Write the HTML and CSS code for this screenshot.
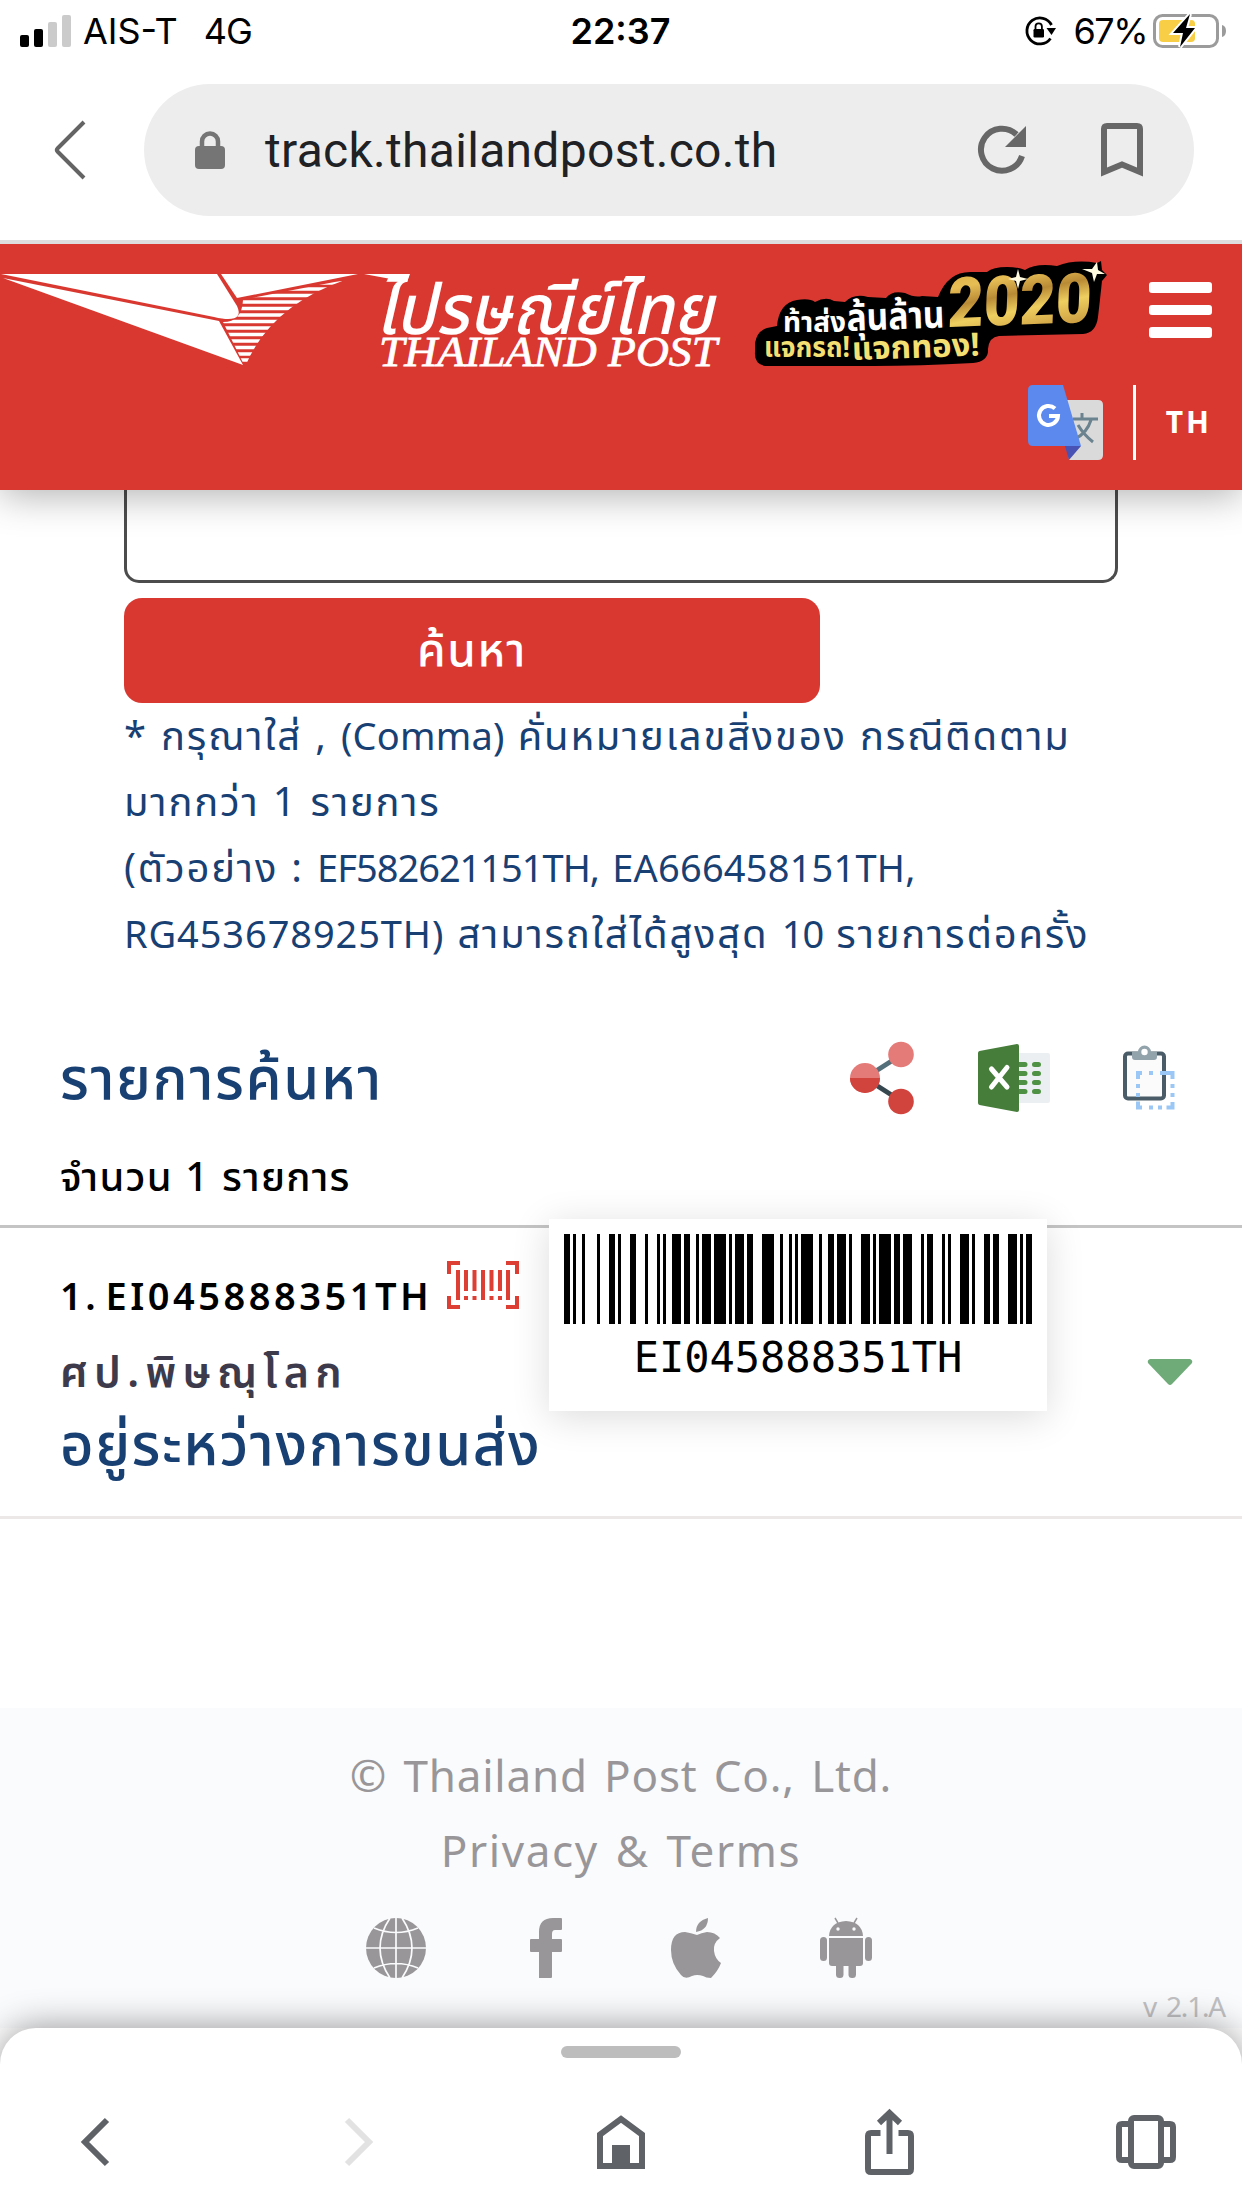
FILE: index.html
```
<!DOCTYPE html>
<html lang="th">
<head>
  <meta charset="UTF-8" />
  <meta name="viewport" content="width=device-width, initial-scale=1.0"/>
  <title>Thailand Post Track &amp; Trace</title>
  <link rel="stylesheet" href="styles.css">
</head>
<body>
  <div class="status-bar">
    <div class="status-left">
      <svg class="signal" width="51" height="32" viewBox="0 0 51 32">
        <rect x="0" y="20" width="9" height="12" rx="2" fill="#000"/>
        <rect x="14" y="14" width="9" height="18" rx="2" fill="#000"/>
        <rect x="28" y="7" width="9" height="25" rx="2" fill="#cbcbcb"/>
        <rect x="42" y="0" width="9" height="32" rx="2" fill="#cbcbcb"/>
      </svg>
      <span class="carrier">AIS-T</span>
      <span class="network">4G</span>
    </div>
    <div class="clock">22:37</div>
    <div class="status-right">
      <svg width="34" height="32" viewBox="0 0 34 32">
        <path d="M27.500 10A13 13 0 1 0 26.500 23.500" fill="none" stroke="#000" stroke-width="2.800"/>
        <path d="M22.500 13h9.500l-4.500 7z" fill="#000"/>
        <rect x="9.500" y="14" width="10.500" height="8.500" rx="1.200" fill="#000"/>
        <path d="M11.500 14.500v-3a3.200 3.200 0 0 1 6.400 0v3" fill="none" stroke="#000" stroke-width="1.800"/>
      </svg>
      <span class="percent">67%</span>
      <svg width="74" height="38" viewBox="0 0 74 38">
        <rect x="1.500" y="3.500" width="63" height="31" rx="8" fill="none" stroke="#9b9b9b" stroke-width="3"/>
        <rect x="6" y="8" width="36" height="22" rx="4" fill="#f8ce46"/>
        <path d="M37 2L20 21h10l-3 14L42 16H33z" fill="#000" stroke="#fff" stroke-width="4" paint-order="stroke"/>
        <path d="M69 13q4 1 4 6t-4 6z" fill="#9b9b9b"/>
      </svg>
    </div>
  </div>

  <div class="address-row">
    <svg class="back" width="36" height="62" viewBox="0 0 36 62">
      <path d="M31 3L4.500 29.500q-1.500 1.500 0 3L31 59" fill="none" stroke="#646464" stroke-width="4"/>
    </svg>
    <div class="address">
      <svg class="lock" width="30" height="38" viewBox="0 0 30 38">
        <rect x="0" y="15" width="30" height="23" rx="4" fill="#757575"/>
        <path d="M7 17v-6.500a8 8 0 0 1 16 0V17" fill="none" stroke="#757575" stroke-width="4.500"/>
      </svg>
      <span class="url">track.thailandpost.co.th</span>
      <svg class="reload" width="48" height="48" viewBox="0 0 48 48">
        <path d="M44 30A21 21 0 1 1 38.500 8.500" fill="none" stroke="#676767" stroke-width="6"/>
        <path d="M48 0v21H27z" fill="#676767"/>
      </svg>
      <svg class="bookmark" width="42" height="54" viewBox="0 0 42 54">
        <path d="M3 49V6q0-3 3-3h30q3 0 3 3v43L21 41.500z" fill="none" stroke="#676767" stroke-width="6"/>
      </svg>
    </div>
  </div>

  <header class="header">
    <div class="header-top">
      <svg class="logo" width="722" height="126" viewBox="0 244 722 126">
        <defs>
          <clipPath id="tail">
            <path d="M252 298L345 280Q270 306 245 367L223 322Q242 322 243 300z"/>
          </clipPath>
        </defs>
        <g fill="#fff">
          <path d="M1 274H217L237 306Q243 319 228 319Q223 319 214 317z"/>
          <path d="M3 278L219 321L243 365z"/>
          <path d="M221 274H358L237 298z"/>
          <path clip-path="url(#tail)" fill="none" stroke="#fff" stroke-width="3.600" d="M220 283h140M220 289h140M220 295.500h140M220 302h140M220 308.500h140M220 315h140M220 321.500h140M220 328h140M220 334.500h140M220 341h140M220 347.500h140M220 354h140M220 360h140"/>
          <path d="M364 274h46l-3 8z"/>
          <text class="logo-th" transform="translate(375 334) skewX(-13)" textLength="338" lengthAdjust="spacingAndGlyphs">ไปรษณีย์ไทย</text>
          <text class="logo-en" x="379" y="366" textLength="338" lengthAdjust="spacingAndGlyphs">THAILAND POST</text>
        </g>
      </svg>
      <svg class="promo" width="356" height="126" viewBox="753 244 356 126">
        <defs>
          <linearGradient id="gold" x1="0" y1="0" x2=".3" y2="1">
            <stop offset="0" stop-color="#d9a93d"/>
            <stop offset=".3" stop-color="#e6bd55"/>
            <stop offset=".5" stop-color="#b98a35"/>
            <stop offset=".7" stop-color="#efcf60"/>
            <stop offset="1" stop-color="#c99a40"/>
          </linearGradient>
        </defs>
        <path d="M755 343Q757 331 767 328L777 326Q779 303 797 300Q810 298 815 302Q826 296 834 301L845 302Q854 293 868 297L886 298Q892 290 905 293Q915 298 922 296L938 297Q948 272 970 272H987Q993 267 1007 267Q1018 267 1025 270Q1036 263 1057 266Q1075 259 1097 263L1101 261 1102 270 1107 275 1102 281Q1100 300 1098 317Q1096 333 1083 334L999 336Q989 337 988 349Q989 361 973 363Q920 366 873 366H768Q754 366 755 352z" fill="#000"/>
        <g class="promo-text">
          <text x="783" y="332" font-size="28" fill="#fff" textLength="63" lengthAdjust="spacingAndGlyphs">ท้าส่ง</text>
          <text x="847" y="331" font-size="38" fill="#fff" textLength="98" lengthAdjust="spacingAndGlyphs" transform="rotate(-2 847 331)">ลุ้นล้าน</text>
          <text x="764" y="357" font-size="29" fill="#f3df72" textLength="86" lengthAdjust="spacingAndGlyphs">แจกรถ!</text>
          <text x="852" y="360" font-size="32" fill="#f3df72" textLength="128" lengthAdjust="spacingAndGlyphs" transform="rotate(-2 852 360)">แจกทอง!</text>
        </g>
        <text class="promo-year" transform="translate(947 327) rotate(-2) skewX(-4)" textLength="144" lengthAdjust="spacingAndGlyphs" fill="url(#gold)">2020</text>
        <path d="M1018 269l2 8 8 2-8 2-2 8-2-8-8-2 8-2zM1097 262l1 8 7 4-8 0-3 8-2-9-10-4 10 0z" fill="#fffbe0"/>
      </svg>
      <div class="menu">
        <span></span>
        <span></span>
        <span></span>
      </div>
    </div>
    <div class="languages">
      <svg width="75" height="75" viewBox="0 0 75 75">
        <path d="M36 15h34q5 0 5 5v50q0 5-5 5H41z" fill="#dadada"/>
        <path d="M45 34h25M54 28v6M63 35Q59 48 47 54M50 40Q56 50 65 57" fill="none" stroke="#6b828f" stroke-width="3"/>
        <path d="M37 61h16L41 75z" fill="#4752b4"/>
        <path d="M5 0h30l18 61H5q-5 0-5-5V5q0-5 5-5z" fill="#5b89ee"/>
        <path d="M27 23.500A9.500 9.500 0 1 0 30 31H21" fill="none" stroke="#fff" stroke-width="4"/>
      </svg>
      <span class="divider"></span>
      <span class="lang">TH</span>
    </div>
  </header>

  <main class="content">
    <section class="search">
      <div class="search-box"></div>
      <button class="btn">ค้นหา</button>
      <div class="hint">
        <p>* กรุณาใส่ , <span class="latin">(Comma)</span> คั่นหมายเลขสิ่งของ กรณีติดตาม</p>
        <p>มากกว่า 1 รายการ</p>
        <p>(ตัวอย่าง : <span class="latin tight">EF582621151TH,</span> <span class="latin">EA666458151TH,</span></p>
        <p><span class="latin wide">RG453678925TH)</span> สามารถใส่ได้สูงสุด <span class="latin tight">10</span> รายการต่อครั้ง</p>
      </div>
    </section>

    <section class="results-head">
      <h2>รายการค้นหา</h2>
      <div class="tools">
        <svg width="64" height="72" viewBox="0 0 64 72">
          <path d="M15 36L51 13" stroke="#546e7a" stroke-width="5"/>
          <path d="M15 36L51 59" stroke="#37474f" stroke-width="5"/>
          <circle cx="51" cy="12.500" r="12.800" fill="#e57b78"/>
          <circle cx="51" cy="59.500" r="12.800" fill="#d1433d"/>
          <circle cx="15" cy="36" r="15" fill="#e57b78"/>
          <path d="M0 36a15 15 0 0 0 30 0z" fill="#d1433d"/>
        </svg>
        <svg width="72" height="68" viewBox="0 0 72 68">
          <rect x="36" y="9" width="36" height="50" rx="2" fill="#eceff1"/>
          <path d="M40 20.500h7M56.500 20.500h4M40 29.500h7M56.500 29.500h4M40 38.500h7M56.500 38.500h4M40 47.500h7M56.500 47.500h4" stroke="#4f9144" stroke-width="5" stroke-linecap="round"/>
          <path d="M1.500 7L39 0q2 0 2 2v64q0 2-2 2L1.500 61Q0 60.500 0 59V9q0-1.500 1.500-2z" fill="#467d3a"/>
          <path d="M13.500 25L29 43M29 23.500L13.500 43" stroke="#fff" stroke-width="5" stroke-linecap="round"/>
        </svg>
        <svg class="clipboard" width="52" height="64" viewBox="0 0 52 64">
          <rect x="2" y="7.500" width="39" height="45" rx="3" fill="#fbfbfb" stroke="#4a5c67" stroke-width="4"/>
          <path d="M15 33v-6h4M26 27h4M37 27h12.500v6M49.500 38v4M49.500 47v4M49.500 56v5.500h-6M39 61.500h-4M30 61.500h-4M19 61.500h-4v-6M15 51v-4M15 42v-4" fill="none" stroke="#9ac7f5" stroke-width="4"/>
          <path d="M9 6h6a6.500 6.500 0 0 1 13 0h6v5q0 3-3 3H12q-3 0-3-3z" fill="#93a3ac"/>
          <circle cx="21.500" cy="6" r="3.200" fill="#fff"/>
        </svg>
      </div>
    </section>
    <p class="count">จำนวน 1 รายการ</p>

    <section class="result">
      <div class="result-info">
        <div class="result-code">
          <span class="code">1. EI045888351TH</span>
          <svg width="72" height="48" viewBox="0 0 72 48" fill="none" stroke="#de3f35" stroke-width="4">
            <path d="M2 13V2h11M59 2h11v11M70 35v11H59M13 46H2V35"/>
            <path d="M11 9v30M19 9v21M27.500 9v21M36 9v30M44.500 9v21M53 9v21M61 9v30M19 35v4M27.500 35v4M44.500 35v4M53 35v4"/>
          </svg>
        </div>
        <p class="place">ศป.พิษณุโลก</p>
        <p class="state">อยู่ระหว่างการขนส่ง</p>
      </div>
      <svg class="arrow" width="46" height="28" viewBox="0 0 46 28">
        <path d="M3 0h40q3 1 2 4L25 25q-2 2-4 0L1 4Q0 1 3 0z" fill="#6fab78"/>
      </svg>
      <div class="barcode-popup">
        <svg id="barcode" width="468" height="90" viewBox="0 0 156 90" preserveAspectRatio="none" shape-rendering="crispEdges"></svg>
        <span>EI045888351TH</span>
      </div>
    </section>
  </main>

  <footer class="footer">
    <p class="copyright">© Thailand Post Co., Ltd.</p>
    <p class="privacy">Privacy &amp; Terms</p>
    <div class="social">
      <svg width="60" height="60" viewBox="0 0 60 60">
        <circle cx="30" cy="30" r="30" fill="#999699"/>
        <path d="M30 0v60M0 30h60M24 0Q4 30 24 60M36 0Q56 30 36 60M8 10Q30 19 52 10M8 50Q30 41 52 50" fill="none" stroke="#fafbfd" stroke-width="1.700"/>
      </svg>
      <svg width="32" height="60" viewBox="0 0 32 60">
        <path d="M9 60V34H1q-1 0-1-1V22q0-1 1-1h8v-7Q9 0 23 0h8q1 0 1 1v10q0 1-1 1h-6q-3 0-3 4v5h9q1 0 1 1v11q0 1-1 1h-9v25q0 1-1 1z" fill="#999699"/>
      </svg>
      <svg class="apple" width="50" height="60" viewBox="0 0 50 60">
        <path d="M37 0q0 12-12 14Q25 3 37 0zM26 17q4-2 10-3 8 0 13 6-7 5-6 13 1 8 7 12-3 8-10 15-5 0-8-2-6-2-11 0-7 4-11-1Q0 46 0 32 0 14 14 14q6 1 12 3z" fill="#999699"/>
      </svg>
      <svg width="52" height="60" viewBox="0 0 52 60" fill="#999699">
        <path d="M9 18Q10 4 26 3q16 1 17 15z"/>
        <path d="M9 20h34v25q0 3-3 3H12q-3 0-3-3z"/>
        <rect x="0" y="19" width="7" height="24" rx="3.500"/>
        <rect x="45" y="19" width="7" height="24" rx="3.500"/>
        <rect x="16" y="42" width="7.500" height="18" rx="3.500"/>
        <rect x="28.500" y="42" width="7.500" height="18" rx="3.500"/>
        <path d="M15 0l3 5M37 0l-3 5" stroke="#999699" stroke-width="1.500"/>
        <circle cx="18" cy="11" r="1.700" fill="#fafbfd"/>
        <circle cx="34" cy="11" r="1.700" fill="#fafbfd"/>
      </svg>
    </div>
    <p class="version">v 2.1.A</p>
  </footer>

  <nav class="bottom-bar">
    <span class="handle"></span>
    <div class="nav-icons">
      <svg width="28" height="48" viewBox="0 0 28 48">
        <path d="M26 2L4 24l22 22" fill="none" stroke="#5f6368" stroke-width="6"/>
      </svg>
      <svg class="nav-forward" width="28" height="48" viewBox="0 0 28 48">
        <path d="M2 2l22 22L2 46" fill="none" stroke="#e2e2e2" stroke-width="6"/>
      </svg>
      <svg class="nav-home" width="48" height="54" viewBox="0 0 48 54">
        <path d="M3 51V19.500L24 4l21 15.500V51z" fill="none" stroke="#5f6368" stroke-width="6"/>
        <path d="M15 30h18v21H15z" fill="#5f6368"/>
      </svg>
      <svg class="nav-share" width="49" height="66" viewBox="0 0 49 66">
        <path d="M15.500 24H6q-3 0-3 3v33q0 3 3 3h37q3 0 3-3V27q0-3-3-3h-9.500M24.500 45V5M14 14L24.500 4 35 14" fill="none" stroke="#5f6368" stroke-width="6"/>
      </svg>
      <svg class="nav-tabs" width="60" height="54" viewBox="0 0 60 54" fill="none" stroke="#5f6368" stroke-width="6">
        <rect x="15" y="3" width="30" height="48" rx="3"/>
        <path d="M15 9H6q-3 0-3 3v30q0 3 3 3h9M45 9h9q3 0 3 3v30q0 3-3 3h-9"/>
      </svg>
    </div>
  </nav>

  <script>
    // bar and space widths, one group per Code 128 symbol
    const symbols = ['211214', '132113', '231311', '123122', '113141', '113123', '421211',
      '114212', '213113', '311141', '213311', '231113', '311321', '2331112'];
    const barcodeEl = document.getElementById('barcode');

    let x = 0;
    let bars = '';
    symbols.join('').split('').forEach((width, i) => {
      if (i % 2 === 0) bars += `M${x} 0h${width}v90h-${width}z`;
      x += +width;
    });
    barcodeEl.innerHTML = `<path d="${bars}"/>`;
  </script>
</body>
</html>
```
FILE: styles.css
```
* {
  box-sizing: border-box;
}

body {
  width: 1242px;
  height: 2208px;
  margin: 0;
  overflow: hidden;
  display: flex;
  flex-direction: column;
  background-color: #fff;
  color: #000;
  font-family: 'Noto Sans', 'Noto Sans Thai', sans-serif;
}

p, h2 {
  margin: 0;
  font-weight: normal;
  white-space: nowrap;
}

svg {
  display: block;
  flex: none;
  overflow: visible;
}

/* phone status bar */
.status-bar {
  display: grid;
  grid-template-columns: 1fr auto 1fr;
  align-items: center;
  height: 60px;
  padding: 1px 15px 0 20px;
  font-family: Inter, sans-serif;
  font-size: 36px;
}

.status-left,
.status-right {
  display: flex;
  align-items: center;
}

.status-right {
  justify-content: flex-end;
}

.carrier {
  margin: 0 26px 0 12px;
}

.network {
  letter-spacing: -1px;
}

.clock {
  margin-right: 6px;
  font-weight: 600;
}

.percent {
  margin: 0 6px 0 15px;
  letter-spacing: -1.500px;
}

/* address bar */
.address-row {
  position: relative;
  z-index: 1;
  display: flex;
  align-items: center;
  height: 184px;
  padding: 0 48px 0 53px;
  border-bottom: 4px solid #dedede;
  background-color: #fff;
}

.address {
  display: flex;
  align-items: center;
  width: 1050px;
  height: 132px;
  margin-left: 55px;
  padding: 0 51px;
  border-radius: 66px;
  background-color: #ededed;
}

.url {
  margin-left: 40px;
  flex: 1;
  color: #202124;
  font-family: Roboto, sans-serif;
  font-size: 48px;
  letter-spacing: 0.300px;
}

.bookmark {
  margin-left: 75px;
}

/* site header */
.header {
  position: relative;
  height: 246px;
  background-color: #d93831;
  box-shadow: 0 6px 36px rgba(0, 0, 0, 0.3);
}

.header-top {
  display: flex;
  height: 141px;
  padding-right: 30px;
}

.promo {
  margin-left: 31px;
}

.logo-th {
  font-size: 70px;
  font-weight: 500;
}

.logo-en {
  font-family: 'Liberation Serif', serif;
  font-size: 42px;
  font-style: italic;
  stroke: #fff;
  stroke-width: 0.800px;
}

.promo-text {
  font-weight: bold;
}

.promo-year {
  font-family: Roboto, sans-serif;
  font-size: 69px;
  font-weight: 900;
}

.menu {
  display: flex;
  flex-direction: column;
  gap: 12px;
  width: 63px;
  margin: 38px 0 0 auto;
}

.menu span {
  height: 10.500px;
  border-radius: 3px;
  background-color: #fff;
}

.languages {
  display: flex;
  align-items: center;
  justify-content: flex-end;
  padding-right: 30px;
}

.divider {
  width: 3px;
  height: 75px;
  margin: 0 30px;
  background-color: #fff;
}

.lang {
  margin-top: -2px;
  color: #fff;
  font-size: 30px;
  font-weight: bold;
  letter-spacing: 3px;
}

/* search form */
.content {
  height: 1218px;
}

.search {
  padding: 0 124px;
}

.search-box {
  height: 93px;
  border: 3px solid #4c4c4c;
  border-top: none;
  border-radius: 0 0 15px 15px;
}

.btn {
  display: block;
  width: 696px;
  height: 105px;
  margin-top: 15px;
  padding: 2px 0 0;
  border: none;
  border-radius: 18px;
  background-color: #d93831;
  color: #fff;
  font-family: inherit;
  font-size: 46px;
  font-weight: 500;
  letter-spacing: 1.500px;
}

.hint {
  height: 265px;
  margin-top: -1px;
  color: #194073;
  font-size: 40px;
  font-weight: 500;
  line-height: 66px;
  letter-spacing: 1.800px;
  word-spacing: 1px;
}

.latin {
  font-size: 38px;
  letter-spacing: 0.200px;
}

.latin.tight {
  letter-spacing: -1px;
}

.latin.wide {
  letter-spacing: 0.900px;
}

/* search results */
.results-head {
  display: flex;
  justify-content: space-between;
  align-items: center;
  height: 100px;
  margin-top: 61px;
  padding: 0 67px 0 60px;
}

.results-head h2 {
  padding-top: 6px;
  color: #194073;
  font-size: 58px;
  font-weight: 500;
  letter-spacing: 1.600px;
}

.tools {
  display: flex;
  align-items: center;
  gap: 64px;
}

.clipboard {
  margin-left: 9px;
}

.count {
  height: 100px;
  padding: 10px 60px 0;
  border-bottom: 3px solid #c4c4c4;
  font-size: 40px;
  font-weight: 500;
  line-height: 76px;
  letter-spacing: 1.200px;
  word-spacing: 1px;
}

.result {
  position: relative;
  display: flex;
  justify-content: space-between;
  height: 291px;
  padding: 33px 49px 0 60px;
  border-bottom: 3px solid #ece8e8;
}

.result-code {
  display: flex;
  gap: 15px;
  height: 72px;
}

.code {
  font-size: 38px;
  font-weight: 600;
  line-height: 68px;
  letter-spacing: 3.500px;
  word-spacing: -7px;
}

.place {
  color: #3c3a4b;
  font-size: 43px;
  font-weight: 600;
  line-height: 76px;
  letter-spacing: 6.300px;
}

.state {
  margin-top: -6px;
  color: #194073;
  font-size: 58px;
  font-weight: 500;
  line-height: 79px;
  letter-spacing: 1.500px;
}

.arrow {
  margin-top: 98px;
}

.barcode-popup {
  position: absolute;
  top: -9px;
  left: 549px;
  display: flex;
  flex-direction: column;
  align-items: center;
  width: 498px;
  height: 192px;
  padding-top: 15px;
  background-color: #fff;
  box-shadow: 0 6px 36px rgba(0, 0, 0, 0.14);
  font-family: 'DejaVu Sans Mono', monospace;
  font-size: 42px;
  line-height: 68px;
}

/* footer */
.footer {
  height: 320px;
  padding-top: 30px;
  background-color: #fafbfd;
  color: #999699;
  font-size: 44px;
  font-weight: 500;
  line-height: 75px;
  text-align: center;
  word-spacing: 4px;
}

.copyright {
  letter-spacing: 0.800px;
}

.privacy {
  letter-spacing: 1.600px;
}

.social {
  display: flex;
  justify-content: center;
  align-items: center;
  gap: 104px;
  margin: 30px 4px 0 0;
}

.apple {
  margin: 0 -5px 0 5px;
}

.version {
  padding-right: 17px;
  color: #c1c1c3;
  font-size: 28px;
  font-weight: normal;
  line-height: 57px;
  letter-spacing: -1.200px;
  text-align: right;
}

/* browser toolbar */
.bottom-bar {
  position: relative;
  height: 180px;
  padding-top: 18px;
  border-radius: 36px 36px 0 0;
  background-color: #fff;
  box-shadow: 0 0 36px rgba(0, 0, 0, 0.42);
}

.handle {
  display: block;
  width: 120px;
  height: 12px;
  margin: 0 auto;
  border-radius: 6px;
  background-color: #bdbdbd;
}

.nav-icons {
  display: flex;
  align-items: center;
  height: 66px;
  margin-top: 51px;
  padding-left: 81px;
}

.nav-forward {
  margin-left: 236px;
}

.nav-home {
  margin-left: 224px;
}

.nav-share {
  margin-left: 220px;
}

.nav-tabs {
  margin-left: 202px;
}
```
